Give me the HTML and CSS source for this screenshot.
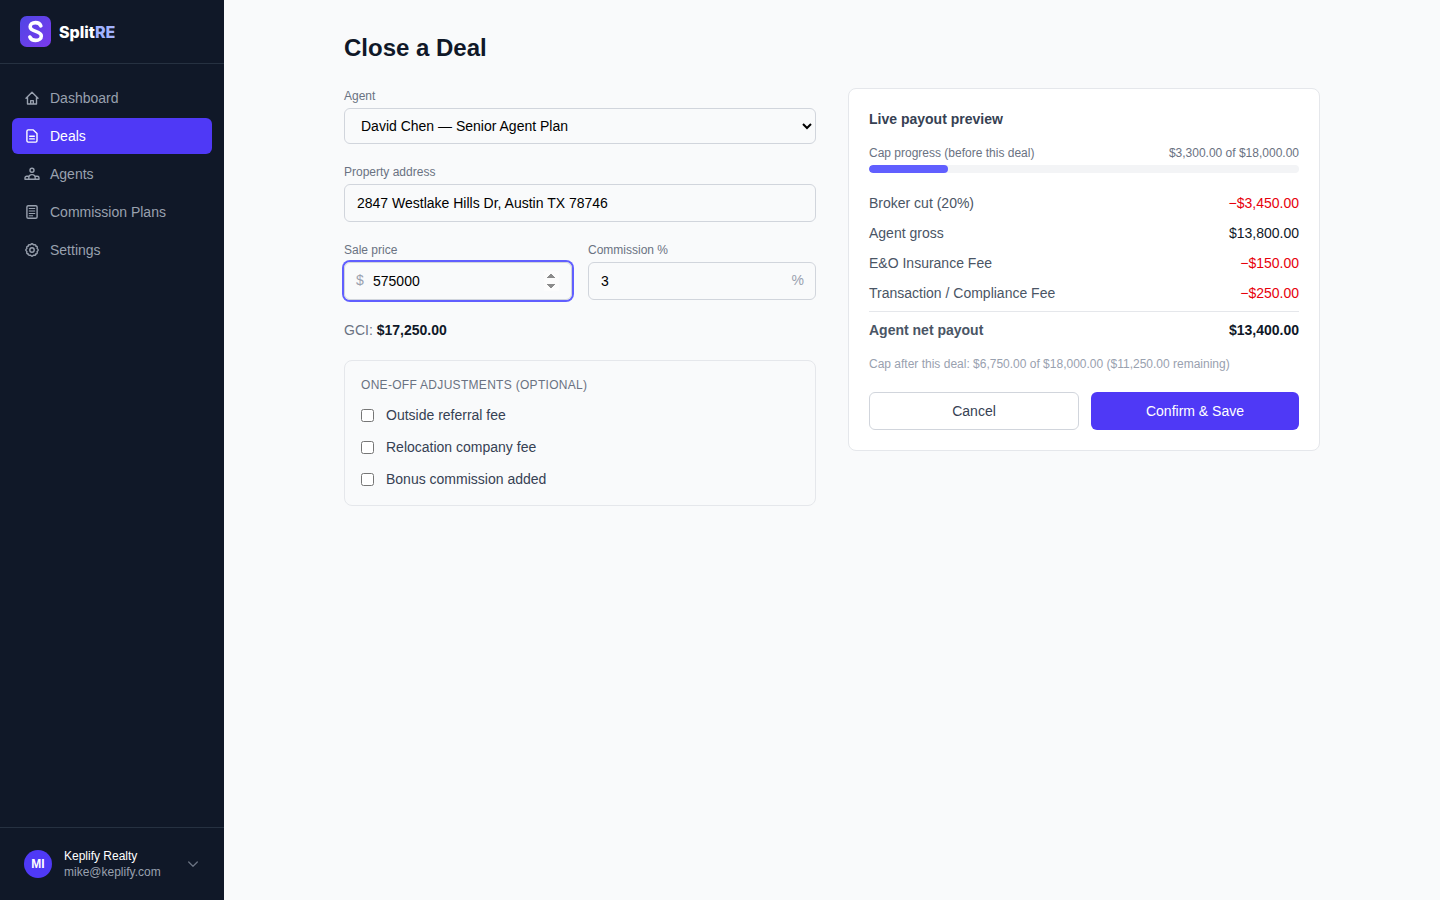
FILE: index.html
```html
<!DOCTYPE html>
<html lang="en">
<head>
    <meta charset="UTF-8">
    <meta name="viewport" content="width=device-width, initial-scale=1.0">
    <title>Close a Deal - SplitRE</title>
    <link rel="stylesheet" href="styles.css">
</head>
<body>
    <!-- Sidebar -->
    <aside class="sidebar">
        <a href="#" class="brand">
            <svg class="brand-mark" viewBox="0 0 32 32" fill="none">
                <defs>
                    <linearGradient id="brand-gradient" x1="0" y1="0" x2="1" y2="1">
                        <stop offset="0" stop-color="#4f46e5"/>
                        <stop offset="1" stop-color="#7c3aed"/>
                    </linearGradient>
                </defs>
                <rect width="32" height="32" rx="7" fill="url(#brand-gradient)"/>
                <path d="M21.500 10.200C20.700 8 18.800 6.800 16 6.800c-3.300 0-5.500 1.800-5.500 4.300 0 5.800 11.500 3.800 11.500 9.500 0 2.700-2.400 4.600-5.800 4.600-3 0-5.100-1.200-6-3.500" stroke="#fff" stroke-width="3.700" stroke-linecap="round"/>
            </svg>
            <span class="brand-name">Split<span class="brand-accent">RE</span></span>
        </a>

        <nav class="nav">
            <a href="#" class="nav-link">
                <svg class="icon" viewBox="0 0 16 16">
                    <path d="M2 8.200 8 2.200l6 6M3.500 7v7h9V7M6.700 14v-3.400h2.600V14"/>
                </svg>
                Dashboard
            </a>
            <a href="#" class="nav-link active">
                <svg class="icon" viewBox="0 0 16 16">
                    <path d="M4.200 1.900h5.100l3.700 3.700v7.200a1.300 1.300 0 0 1-1.300 1.300H4.200a1.300 1.300 0 0 1-1.300-1.300V3.200a1.300 1.300 0 0 1 1.300-1.300zM5.700 8.300h4.600M5.700 10.900h4.600"/>
                </svg>
                Deals
            </a>
            <a href="#" class="nav-link">
                <svg class="icon" viewBox="0 0 16 16">
                    <circle cx="8" cy="4.300" r="2"/>
                    <path d="M4.800 13.300v-1.500a3.200 3.200 0 0 1 6.400 0v1.500M5 10.200H2.700A1.700 1.700 0 0 0 1 11.900v1.400h14v-1.400a1.700 1.700 0 0 0-1.700-1.700H11"/>
                </svg>
                Agents
            </a>
            <a href="#" class="nav-link">
                <svg class="icon" viewBox="0 0 16 16">
                    <rect x="2.900" y="1.700" width="10.200" height="12.600" rx="1.400"/>
                    <path class="thin" d="M5.200 4.500h5.600M5.200 7h5.600M5.200 9.500h5.600M5.200 11.800h3.500"/>
                </svg>
                Commission Plans
            </a>
            <a href="#" class="nav-link">
                <svg class="icon" viewBox="0 0 16 16">
                    <circle cx="8" cy="8" r="2.200"/>
                    <path d="M6.500 2.900Q8 .700 9.500 2.900Q12.100 2.300 12 4.400Q13.700 3.900 13.100 6.500Q15.300 8 13.100 9.500Q13.700 12.100 11.600 11.900Q12.100 13.700 9.500 13.100Q8 15.300 6.500 13.100Q3.900 13.700 4.100 11.600Q2.300 12.100 2.900 9.500Q.700 8 2.900 6.500Q2.300 3.900 4.400 4.100Q3.900 2.300 6.500 2.900z"/>
                </svg>
                Settings
            </a>
        </nav>

        <div class="sidebar-footer">
            <button type="button" class="account">
                <span class="avatar">MI</span>
                <span class="account-text">
                    <span class="account-name">Keplify Realty</span>
                    <span class="account-email">mike@keplify.com</span>
                </span>
                <svg class="chevron" viewBox="0 0 14 14">
                    <path d="M2.700 5 7 9.300 11.300 5"/>
                </svg>
            </button>
        </div>
    </aside>

    <!-- Main content -->
    <main class="main">
        <div class="container">
            <h1>Close a Deal</h1>

            <form class="columns">
                <div class="fields">
                    <div class="field">
                        <label for="agent">Agent</label>
                        <select id="agent" class="control">
                            <option>David Chen — Senior Agent Plan</option>
                        </select>
                    </div>

                    <div class="field">
                        <label for="address">Property address</label>
                        <input type="text" id="address" class="control" value="2847 Westlake Hills Dr, Austin TX 78746">
                    </div>

                    <div class="field-row">
                        <div class="field">
                            <label for="price">Sale price</label>
                            <div class="affix">
                                <span class="prefix">$</span>
                                <input type="number" id="price" class="control has-prefix focused" value="575000" autofocus>
                            </div>
                        </div>
                        <div class="field">
                            <label for="commission">Commission %</label>
                            <div class="affix">
                                <input type="number" id="commission" class="control has-suffix" value="3">
                                <span class="suffix">%</span>
                            </div>
                        </div>
                    </div>

                    <p class="gci">GCI: <strong>$17,250.00</strong></p>

                    <section class="adjustments">
                        <h2>One-off adjustments (optional)</h2>
                        <label class="check"><input type="checkbox"> Outside referral fee</label>
                        <label class="check"><input type="checkbox"> Relocation company fee</label>
                        <label class="check"><input type="checkbox"> Bonus commission added</label>
                    </section>
                </div>

                <!-- Payout preview -->
                <section class="card">
                    <h2>Live payout preview</h2>

                    <div class="cap-row">
                        <span>Cap progress (before this deal)</span>
                        <span>$3,300.00 of $18,000.00</span>
                    </div>
                    <div class="progress">
                        <div class="progress-fill" style="width: 18.33%"></div>
                    </div>

                    <dl class="payout">
                        <div class="line"><dt>Broker cut (20%)</dt><dd class="minus">−$3,450.00</dd></div>
                        <div class="line"><dt>Agent gross</dt><dd>$13,800.00</dd></div>
                        <div class="line"><dt>E&amp;O Insurance Fee</dt><dd class="minus">−$150.00</dd></div>
                        <div class="line"><dt>Transaction / Compliance Fee</dt><dd class="minus">−$250.00</dd></div>
                    </dl>
                    <dl class="net">
                        <div class="line"><dt>Agent net payout</dt><dd>$13,400.00</dd></div>
                    </dl>

                    <p class="cap-after">Cap after this deal: $6,750.00 of $18,000.00 ($11,250.00 remaining)</p>

                    <div class="actions">
                        <button type="button" class="btn btn-outline">Cancel</button>
                        <button type="submit" class="btn btn-primary">Confirm &amp; Save</button>
                    </div>
                </section>
            </form>
        </div>
    </main>
</body>
</html>
```

FILE: styles.css
```css
* {
    box-sizing: border-box;
    margin: 0;
    padding: 0;
}

body {
    display: flex;
    min-height: 100vh;
    background: #f9fafb;
    color: #101828;
    font-family: "Liberation Sans", Arial, sans-serif;
    font-size: 14px;
    line-height: 20px;
}

button,
input,
select {
    font: inherit;
    color: inherit;
}

button {
    cursor: pointer;
}

a {
    text-decoration: none;
}

/* Sidebar */
.sidebar {
    display: flex;
    flex-direction: column;
    flex-shrink: 0;
    width: 224px;
    height: 100vh;
    position: sticky;
    top: 0;
    background: #101828;
}

.brand {
    display: flex;
    align-items: center;
    gap: 8px;
    height: 64px;
    padding: 0 20px;
    border-bottom: 1px solid #263141;
}

.brand-mark {
    width: 31px;
    height: 31px;
}

.brand-name {
    color: #fff;
    font-family: Inter, sans-serif;
    font-size: 16px;
    font-weight: 800;
}

.brand-accent {
    color: #a3b3ff;
}

.nav {
    display: flex;
    flex-direction: column;
    flex: 1;
    gap: 2px;
    padding: 16px 12px;
}

.nav-link {
    display: flex;
    align-items: center;
    gap: 10px;
    padding: 8px 12px;
    border-radius: 6px;
    color: #99a1af;
}

.nav-link:hover {
    color: #fff;
}

.nav-link.active {
    background: #4f39f6;
    color: #fff;
}

.icon {
    width: 16px;
    height: 16px;
    fill: none;
    stroke: currentColor;
    stroke-width: 1.4;
    stroke-linecap: round;
    stroke-linejoin: round;
}

.icon .thin {
    stroke-width: 1;
}

.sidebar-footer {
    padding: 12px;
    border-top: 1px solid #263141;
}

.account {
    display: flex;
    align-items: center;
    gap: 12px;
    width: 100%;
    padding: 8px 12px;
    border: 0;
    background: none;
    font-size: 12px;
    line-height: 16px;
    text-align: left;
}

.avatar {
    width: 28px;
    height: 28px;
    border-radius: 50%;
    background: #4f39f6;
    color: #fff;
    font-weight: 700;
    line-height: 28px;
    text-align: center;
}

.account-text {
    display: flex;
    flex-direction: column;
    flex: 1;
}

.account-name {
    color: #fff;
}

.account-email {
    color: #99a1af;
}

.chevron {
    width: 14px;
    height: 14px;
    fill: none;
    stroke: #6a7282;
    stroke-width: 1.3;
    stroke-linecap: round;
    stroke-linejoin: round;
}

/* Page */
.main {
    flex: 1;
    min-width: 0;
}

.container {
    max-width: 1024px;
    margin: 0 auto;
    padding: 32px 24px;
}

h1 {
    margin-bottom: 24px;
    font-size: 24px;
    line-height: 32px;
}

.columns {
    display: grid;
    grid-template-columns: 1fr 1fr;
    align-items: start;
    gap: 32px;
}

/* Form fields */
.fields {
    display: flex;
    flex-direction: column;
    gap: 20px;
}

.field {
    display: flex;
    flex-direction: column;
    gap: 4px;
    color: #6a7282;
    font-size: 12px;
    line-height: 16px;
}

.field-row {
    display: grid;
    grid-template-columns: 1fr 1fr;
    gap: 16px;
}

.control {
    display: block;
    width: 100%;
    padding: 8px 12px;
    border: 1px solid #d1d5dc;
    border-radius: 6px;
    background: transparent;
    color: #000;
    font-size: 14px;
    line-height: 20px;
    outline: none;
}

select.control {
    height: 36px;
}

.control:focus,
.control.focused {
    box-shadow: 0 0 0 2px #615fff;
}

.control.focused::-webkit-inner-spin-button {
    opacity: 1;
}

.affix {
    position: relative;
}

.prefix,
.suffix {
    position: absolute;
    top: 8px;
    color: #99a1af;
    font-size: 14px;
    line-height: 20px;
}

.prefix {
    left: 12px;
}

.suffix {
    right: 12px;
}

.has-prefix {
    padding-left: 28px;
}

.has-suffix {
    padding-right: 28px;
}

.gci {
    color: #6a7282;
}

.gci strong {
    color: #101828;
}

.adjustments {
    display: flex;
    flex-direction: column;
    gap: 12px;
    padding: 16px;
    border: 1px solid #e5e7eb;
    border-radius: 8px;
}

.adjustments h2 {
    color: #6a7282;
    font-size: 12px;
    font-weight: 400;
    line-height: 16px;
    letter-spacing: 0.3px;
    text-transform: uppercase;
}

.check {
    display: flex;
    align-items: center;
    gap: 12px;
    color: #364153;
}

/* Payout card */
.card {
    padding: 20px;
    border: 1px solid #e5e7eb;
    border-radius: 8px;
    background: #fff;
}

.card h2 {
    margin-bottom: 16px;
    color: #364153;
    font-size: 14px;
    line-height: 20px;
}

.cap-row {
    display: flex;
    justify-content: space-between;
    margin-bottom: 4px;
    color: #6a7282;
    font-size: 12px;
    line-height: 16px;
}

.progress {
    height: 8px;
    margin-bottom: 20px;
    border-radius: 4px;
    background: #f3f4f6;
    overflow: hidden;
}

.progress-fill {
    height: 100%;
    border-radius: 4px;
    background: #615fff;
}

.payout {
    display: flex;
    flex-direction: column;
    gap: 10px;
}

.line {
    display: flex;
    justify-content: space-between;
}

.line dt {
    color: #4a5565;
}

.line .minus {
    color: #e7000b;
}

.net {
    margin-top: 8px;
    padding-top: 8px;
    border-top: 1px solid #e5e7eb;
    font-weight: 700;
}

.cap-after {
    margin: 16px 0 20px;
    color: #99a1af;
    font-size: 12px;
    line-height: 16px;
}

.actions {
    display: flex;
    gap: 12px;
}

.btn {
    flex: 1;
    padding: 8px 16px;
    border: 0;
    border-radius: 6px;
}

.btn-outline {
    border: 1px solid #d1d5dc;
    background: #fff;
    color: #364153;
}

.btn-primary {
    background: #4f39f6;
    color: #fff;
}
```
